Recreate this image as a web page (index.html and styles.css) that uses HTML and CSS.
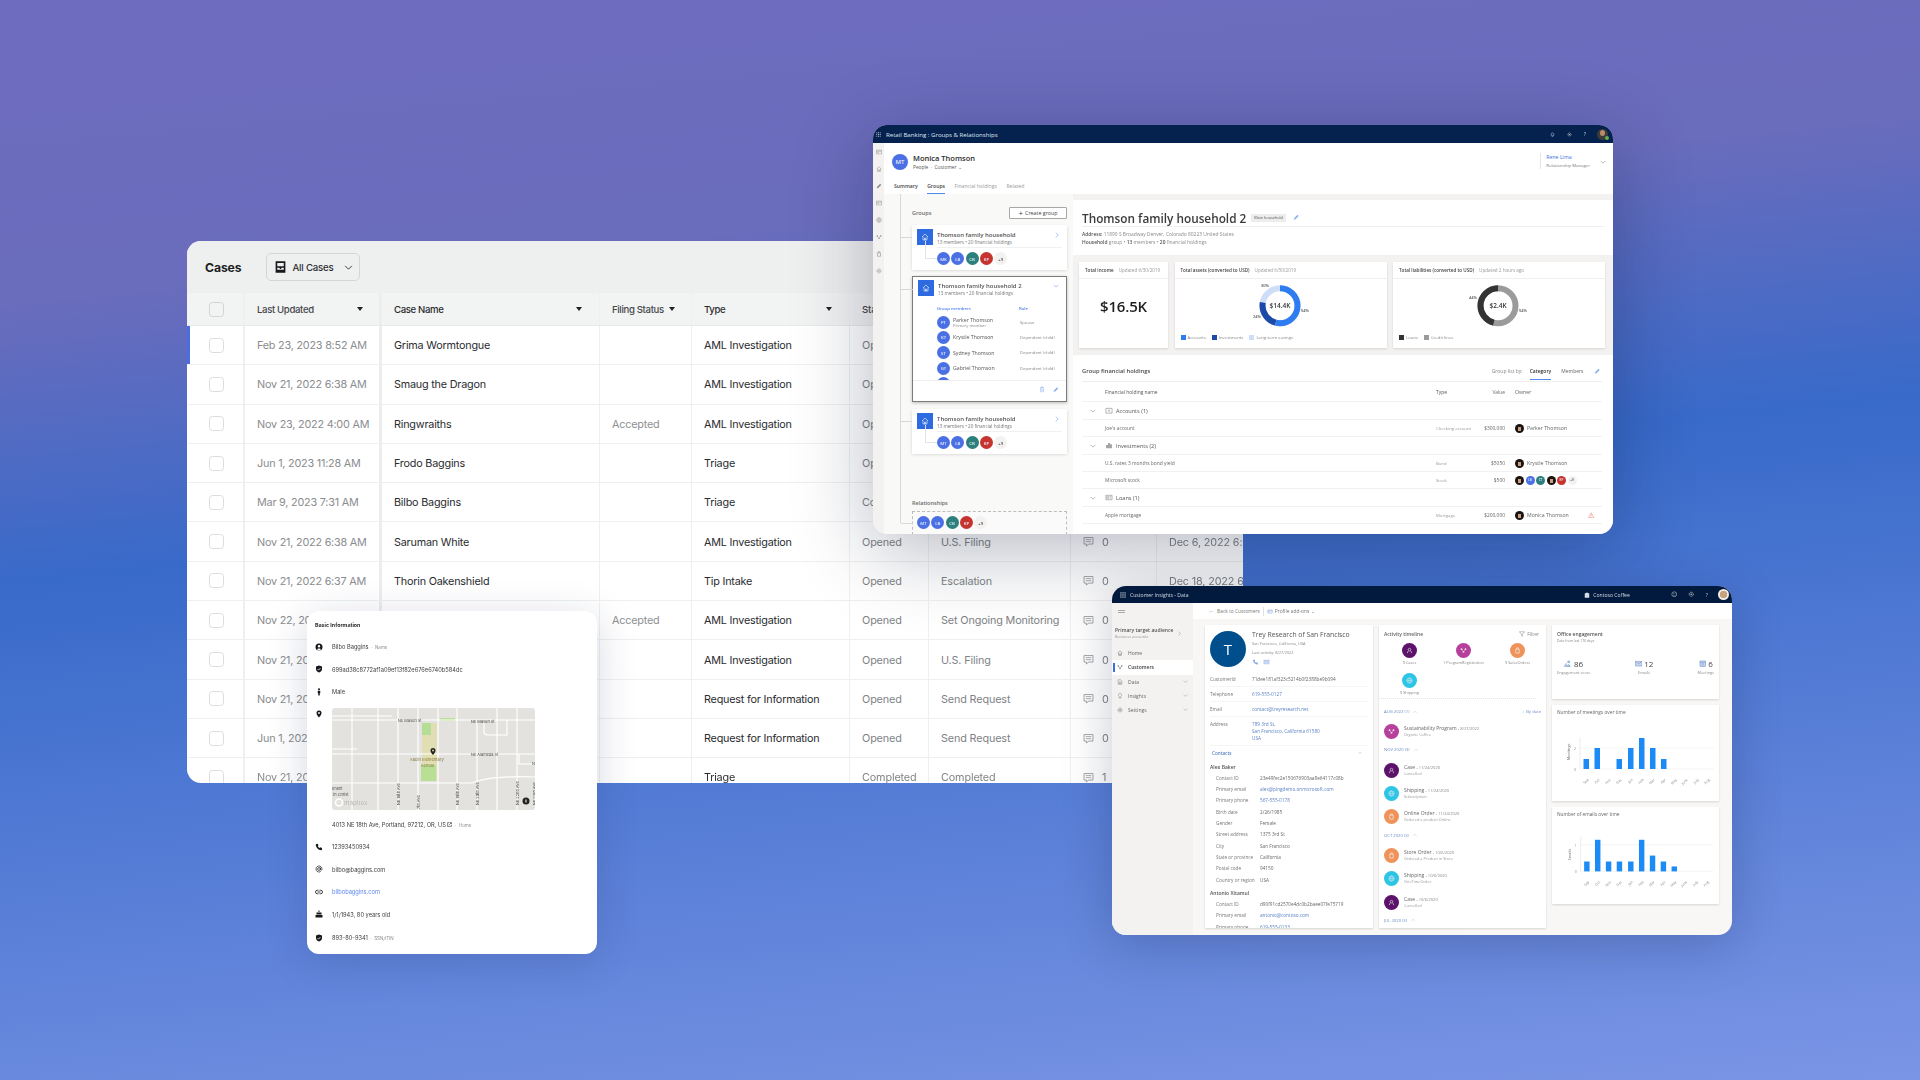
FILE: index.html
```html
<!DOCTYPE html>
<html lang="en">
<head>
<meta charset="utf-8">
<title>Product screens</title>
<link rel="stylesheet" href="styles.css">
</head>
<body>
<svg class="sprite" aria-hidden="true">
  <symbol id="i-home" viewBox="0 0 16 16"><path d="M2 8l6-6 6 6M4 7v7h8V7M7 14v-4h2v4" fill="none" stroke="currentColor" stroke-width="1.3"/></symbol>
  <symbol id="i-right" viewBox="0 0 16 16"><path d="M5 2l6 6-6 6" fill="none" stroke="currentColor" stroke-width="1.5"/></symbol>
  <symbol id="i-down" viewBox="0 0 16 16"><path d="M2 5l6 6 6-6" fill="none" stroke="currentColor" stroke-width="1.5"/></symbol>
  <symbol id="i-up" viewBox="0 0 16 16"><path d="M2 11l6-6 6 6" fill="none" stroke="currentColor" stroke-width="1.5"/></symbol>
  <symbol id="i-pencil" viewBox="0 0 16 16"><path d="M2 14l1-4 8-8 3 3-8 8z" fill="currentColor"/></symbol>
  <symbol id="i-trash" viewBox="0 0 16 16"><path d="M4 3h8v11H4zM6 1h4v2H6z" fill="none" stroke="currentColor" stroke-width="1.4"/><path d="M7 6v6M9 6v6" stroke="currentColor"/></symbol>
  <symbol id="i-bell" viewBox="0 0 16 16"><path d="M4 12V7a4 4 0 018 0v5zM6 14h4" fill="none" stroke="currentColor" stroke-width="1.6"/></symbol>
  <symbol id="i-gear" viewBox="0 0 16 16"><circle cx="8" cy="8" r="5" fill="none" stroke="currentColor" stroke-width="2.4" stroke-dasharray="2 1"/><circle cx="8" cy="8" r="2" fill="currentColor"/></symbol>
  <symbol id="i-smile" viewBox="0 0 16 16"><circle cx="8" cy="8" r="6" fill="none" stroke="currentColor" stroke-width="1.5"/><path d="M5 10q3 2 6 0" fill="none" stroke="currentColor"/><circle cx="6" cy="6.5" r="1" fill="currentColor"/><circle cx="10" cy="6.5" r="1" fill="currentColor"/></symbol>
  <symbol id="i-waffle" viewBox="0 0 16 16"><g fill="currentColor"><rect x="1" y="1" width="3" height="3"/><rect x="6.5" y="1" width="3" height="3"/><rect x="12" y="1" width="3" height="3"/><rect x="1" y="6.5" width="3" height="3"/><rect x="6.5" y="6.5" width="3" height="3"/><rect x="12" y="6.5" width="3" height="3"/><rect x="1" y="12" width="3" height="3"/><rect x="6.5" y="12" width="3" height="3"/><rect x="12" y="12" width="3" height="3"/></g></symbol>
  <symbol id="i-comment" viewBox="0 0 16 16"><path d="M1.5 1.5h13v9.5H8l-3 3v-3H1.5z" fill="none" stroke="currentColor" stroke-width="1.1"/><path d="M4 4.5h8M4 7.5h8" stroke="currentColor" stroke-width="1"/></symbol>
  <symbol id="i-inbox" viewBox="0 0 16 16"><path d="M2 1h12v14H2z" fill="currentColor"/><path d="M4 3h8v4H4zM4 9h2.500l1 1.500h1L9.500 9H12v2.500H4z" fill="#eeefef"/></symbol>
  <symbol id="i-user" viewBox="0 0 16 16"><path fill-rule="evenodd" d="M8 1a7 7 0 110 14A7 7 0 018 1zm0 3a2.500 2.500 0 100 5 2.500 2.500 0 000-5zM4 12.500c1-2 7-2 8 0A6 6 0 0 1 4 12.500z" fill="currentColor"/></symbol>
  <symbol id="i-shield" viewBox="0 0 16 16"><path d="M8 1l6 2v5c0 4-3 6-6 7-3-1-6-3-6-7V3z" fill="currentColor"/><path d="M5 8l2.200 2.200L11 6" fill="none" stroke="#fff" stroke-width="1.4"/></symbol>
  <symbol id="i-male" viewBox="0 0 16 16"><circle cx="8" cy="2.500" r="2" fill="currentColor"/><path d="M5.500 5.500h5v5H9.500V15h-3v-4.500h-1z" fill="currentColor"/></symbol>
  <symbol id="i-pin" viewBox="0 0 16 16"><path fill-rule="evenodd" d="M8 1a5 5 0 015 5c0 3.500-5 9-5 9S3 9.500 3 6a5 5 0 015-5zm0 3.200a1.800 1.800 0 100 3.600 1.800 1.800 0 000-3.600z" fill="currentColor"/></symbol>
  <symbol id="i-phone" viewBox="0 0 16 16"><path d="M3 2l2.500-.5 1.500 3-1.500 1.500c.8 1.800 2.200 3.200 4 4l1.500-1.500 3 1.500L14 13c-.3 1-1 1.500-2 1.500C7 14 2 9 1.500 4c0-1 .7-1.700 1.500-2z" fill="currentColor"/></symbol>
  <symbol id="i-at" viewBox="0 0 16 16"><circle cx="8" cy="8" r="2.800" fill="none" stroke="currentColor" stroke-width="1.4"/><path d="M10.800 5v4c0 2 3.200 2 3.200-1a6 6 0 10-2.500 4.900" fill="none" stroke="currentColor" stroke-width="1.4"/></symbol>
  <symbol id="i-link" viewBox="0 0 16 16"><path d="M7 4.500H4.500a3.500 3.500 0 000 7H7M9 4.500h2.500a3.500 3.500 0 010 7H9M5 8h6" fill="none" stroke="currentColor" stroke-width="1.6"/></symbol>
  <symbol id="i-cake" viewBox="0 0 16 16"><path d="M7 1h2v3H7zM3 5h10v4H3zM1 10h14v5H1z" fill="currentColor"/></symbol>
  <symbol id="i-ext" viewBox="0 0 16 16"><path d="M7 2H2v12h12V9M9 2h5v5M14 2L7 9" fill="none" stroke="currentColor" stroke-width="2"/></symbol>
  <symbol id="i-case" viewBox="0 0 16 16"><circle cx="8" cy="6" r="3" fill="none" stroke="currentColor" stroke-width="1.400"/><path d="M3 14c0-2 1.500-4 2.500-5M13 14c0-2-1.500-4-2.500-5" fill="none" stroke="currentColor" stroke-width="1.400"/></symbol>
  <symbol id="i-prog" viewBox="0 0 16 16"><circle cx="3.500" cy="5" r="2" fill="currentColor"/><circle cx="12.500" cy="5" r="2" fill="currentColor"/><circle cx="8" cy="11" r="2" fill="currentColor"/><path d="M3.500 5L8 11l4.500-6" fill="none" stroke="currentColor"/></symbol>
  <symbol id="i-bag" viewBox="0 0 16 16"><path d="M4 5h8v9H4zM6 5V2h4v3" fill="none" stroke="currentColor" stroke-width="1.500"/></symbol>
  <symbol id="i-globe" viewBox="0 0 16 16"><circle cx="8" cy="8" r="6" fill="none" stroke="currentColor" stroke-width="1.300"/><path d="M2 8h12M8 2c-3 3-3 9 0 12M8 2c3 3 3 9 0 12" fill="none" stroke="currentColor"/></symbol>
  <symbol id="i-filter" viewBox="0 0 16 16"><path d="M1 2h14L9.500 8.500V14l-3-1.500v-4z" fill="none" stroke="currentColor" stroke-width="1.200"/></symbol>
  <symbol id="i-mail" viewBox="0 0 16 16"><path d="M1 3h14v10H1z" fill="currentColor" opacity=".35"/><path d="M1 3h14v10H1zM1 3l7 5 7-5" fill="none" stroke="currentColor"/></symbol>
  <symbol id="i-cal" viewBox="0 0 16 16"><path d="M2 2h12v12H2z" fill="currentColor" opacity=".35"/><path d="M2 2h12v12H2zM2 5h12M6 8h4M6 11h4" fill="none" stroke="currentColor"/></symbol>
  <symbol id="i-people" viewBox="0 0 16 16"><circle cx="10" cy="4" r="3" fill="currentColor" opacity=".6"/><path d="M6 15c0-4 2-6 4-6s4 2 4 6z" fill="currentColor" opacity=".6"/><path d="M2 15V10M4.500 15V7" stroke="currentColor" stroke-width="1.600"/></symbol>
  <symbol id="i-list" viewBox="0 0 16 16"><path d="M1 3h14v10H1zM1 6h14M3 9h5" fill="none" stroke="currentColor" stroke-width="1.300"/></symbol>
  <symbol id="i-barsq" viewBox="0 0 16 16"><path d="M2 14V7h3v7zM6.500 14V2h3v12zM11 14V5h3v9z" fill="currentColor"/></symbol>
  <symbol id="i-acct" viewBox="0 0 16 16"><path d="M1 3h14v11H1z" fill="none" stroke="currentColor" stroke-width="1.200"/><path d="M6 11l2-5 2 5" fill="none" stroke="currentColor"/></symbol>
  <symbol id="i-loan" viewBox="0 0 16 16"><path d="M1 3h14v10H1z" fill="none" stroke="currentColor" stroke-width="1.200"/><path d="M3 6h4v4H3zM9 6h4M9 9h4" fill="none" stroke="currentColor"/></symbol>
  <symbol id="i-building" viewBox="0 0 16 16"><path d="M2 15V4l6-3 6 3v11zM5 7h2M9 7h2M5 10h2M9 10h2" fill="currentColor"/></symbol>
  <symbol id="i-warn" viewBox="0 0 16 16"><path d="M8 2l7 12H1z" fill="none" stroke="currentColor" stroke-width="1.500"/><path d="M8 6v4M8 11v1.500" stroke="currentColor" stroke-width="1.300"/></symbol>
  <symbol id="i-data" viewBox="0 0 16 16"><path d="M3 2h7l3 3v9H3zM6 8h4v4H6z" fill="none" stroke="currentColor" stroke-width="1.200"/></symbol>
  <symbol id="i-bulb" viewBox="0 0 16 16"><path d="M8 1a4.500 4.500 0 00-2.500 8.200V12h5V9.200A4.500 4.500 0 008 1zM6 14h4" fill="none" stroke="currentColor" stroke-width="1.200"/></symbol>
</svg>

<!-- Cases table -->
<section class="win win-cases">
  <header class="cases-head">
    <h1 class="cases-title">Cases</h1>
    <button class="view-btn"><svg class="ic-inbox"><use href="#i-inbox"/></svg><span>All Cases</span><svg class="ic-viewdown"><use href="#i-down"/></svg></button>
  </header>
  <div class="tbl">
    <div class="row row-head">
      <div class="cell c-check"><span class="box"></span></div>
      <div class="cell c-date">Last Updated<i class="sort"></i></div>
      <div class="cell c-name">Case Name<i class="sort"></i></div>
      <div class="cell c-filing">Filing Status<i class="sort"></i></div>
      <div class="cell c-type">Type<i class="sort"></i></div>
      <div class="cell c-status">Status</div>
      <div class="cell c-sub">Sub-status</div>
      <div class="cell c-com">Comments</div>
      <div class="cell c-due">Due Date</div>
    </div>
    <div class="row row-active">
      <div class="cell c-check"><span class="box"></span></div><div class="cell c-date">Feb 23, 2023 8:52 AM</div><div class="cell c-name">Grima Wormtongue</div><div class="cell c-filing"></div><div class="cell c-type">AML Investigation</div><div class="cell c-status">Opened</div><div class="cell c-sub">U.S. Filing</div><div class="cell c-com"><svg class="ic-com"><use href="#i-comment"/></svg>0</div><div class="cell c-due">Dec 6, 2022 6:38 AM</div>
    </div>
    <div class="row">
      <div class="cell c-check"><span class="box"></span></div><div class="cell c-date">Nov 21, 2022 6:38 AM</div><div class="cell c-name">Smaug the Dragon</div><div class="cell c-filing"></div><div class="cell c-type">AML Investigation</div><div class="cell c-status">Opened</div><div class="cell c-sub">U.S. Filing</div><div class="cell c-com"><svg class="ic-com"><use href="#i-comment"/></svg>0</div><div class="cell c-due">Dec 6, 2022 6:38 AM</div>
    </div>
    <div class="row">
      <div class="cell c-check"><span class="box"></span></div><div class="cell c-date">Nov 23, 2022 4:00 AM</div><div class="cell c-name">Ringwraiths</div><div class="cell c-filing">Accepted</div><div class="cell c-type">AML Investigation</div><div class="cell c-status">Opened</div><div class="cell c-sub">U.S. Filing</div><div class="cell c-com"><svg class="ic-com"><use href="#i-comment"/></svg>0</div><div class="cell c-due">Dec 6, 2022 6:38 AM</div>
    </div>
    <div class="row">
      <div class="cell c-check"><span class="box"></span></div><div class="cell c-date">Jun 1, 2023 11:28 AM</div><div class="cell c-name">Frodo Baggins</div><div class="cell c-filing"></div><div class="cell c-type">Triage</div><div class="cell c-status">Opened</div><div class="cell c-sub">Escalation</div><div class="cell c-com"><svg class="ic-com"><use href="#i-comment"/></svg>0</div><div class="cell c-due">Dec 6, 2022 6:38 AM</div>
    </div>
    <div class="row">
      <div class="cell c-check"><span class="box"></span></div><div class="cell c-date">Mar 9, 2023 7:31 AM</div><div class="cell c-name">Bilbo Baggins</div><div class="cell c-filing"></div><div class="cell c-type">Triage</div><div class="cell c-status">Completed</div><div class="cell c-sub">Completed</div><div class="cell c-com"><svg class="ic-com"><use href="#i-comment"/></svg>0</div><div class="cell c-due">Dec 6, 2022 6:38 AM</div>
    </div>
    <div class="row">
      <div class="cell c-check"><span class="box"></span></div><div class="cell c-date">Nov 21, 2022 6:38 AM</div><div class="cell c-name">Saruman White</div><div class="cell c-filing"></div><div class="cell c-type">AML Investigation</div><div class="cell c-status">Opened</div><div class="cell c-sub">U.S. Filing</div><div class="cell c-com"><svg class="ic-com"><use href="#i-comment"/></svg>0</div><div class="cell c-due">Dec 6, 2022 6:38 AM</div>
    </div>
    <div class="row">
      <div class="cell c-check"><span class="box"></span></div><div class="cell c-date">Nov 21, 2022 6:37 AM</div><div class="cell c-name">Thorin Oakenshield</div><div class="cell c-filing"></div><div class="cell c-type">Tip Intake</div><div class="cell c-status">Opened</div><div class="cell c-sub">Escalation</div><div class="cell c-com"><svg class="ic-com"><use href="#i-comment"/></svg>0</div><div class="cell c-due">Dec 18, 2022 6:37 AM</div>
    </div>
    <div class="row">
      <div class="cell c-check"><span class="box"></span></div><div class="cell c-date">Nov 22, 2022 4:00 AM</div><div class="cell c-name">Gollum</div><div class="cell c-filing">Accepted</div><div class="cell c-type">AML Investigation</div><div class="cell c-status">Opened</div><div class="cell c-sub">Set Ongoing Monitoring</div><div class="cell c-com"><svg class="ic-com"><use href="#i-comment"/></svg>0</div><div class="cell c-due">Dec 18, 2022 6:37 AM</div>
    </div>
    <div class="row">
      <div class="cell c-check"><span class="box"></span></div><div class="cell c-date">Nov 21, 2022 6:38 AM</div><div class="cell c-name">Sauron</div><div class="cell c-filing"></div><div class="cell c-type">AML Investigation</div><div class="cell c-status">Opened</div><div class="cell c-sub">U.S. Filing</div><div class="cell c-com"><svg class="ic-com"><use href="#i-comment"/></svg>0</div><div class="cell c-due">Dec 6, 2022 6:38 AM</div>
    </div>
    <div class="row">
      <div class="cell c-check"><span class="box"></span></div><div class="cell c-date">Nov 21, 2022 6:38 AM</div><div class="cell c-name">Samwise Gamgee</div><div class="cell c-filing"></div><div class="cell c-type">Request for Information</div><div class="cell c-status">Opened</div><div class="cell c-sub">Send Request</div><div class="cell c-com"><svg class="ic-com"><use href="#i-comment"/></svg>0</div><div class="cell c-due">Dec 6, 2022 6:38 AM</div>
    </div>
    <div class="row">
      <div class="cell c-check"><span class="box"></span></div><div class="cell c-date">Jun 1, 2023 11:28 AM</div><div class="cell c-name">Peregrin Took</div><div class="cell c-filing"></div><div class="cell c-type">Request for Information</div><div class="cell c-status">Opened</div><div class="cell c-sub">Send Request</div><div class="cell c-com"><svg class="ic-com"><use href="#i-comment"/></svg>0</div><div class="cell c-due">Dec 6, 2022 6:38 AM</div>
    </div>
    <div class="row">
      <div class="cell c-check"><span class="box"></span></div><div class="cell c-date">Nov 21, 2022 6:38 AM</div><div class="cell c-name">Meriadoc Brandybuck</div><div class="cell c-filing"></div><div class="cell c-type">Triage</div><div class="cell c-status">Completed</div><div class="cell c-sub">Completed</div><div class="cell c-com"><svg class="ic-com"><use href="#i-comment"/></svg>1</div><div class="cell c-due">Dec 6, 2022 6:38 AM</div>
    </div>
  </div>
</section>

<!-- Basic information card -->
<section class="win win-info">
  <h2 class="info-title">Basic Information</h2>
  <div class="info-row"><svg class="ic-info"><use href="#i-user"/></svg><div>Bilbo Baggins<span class="info-tag"> &nbsp;· &nbsp;Name</span></div></div>
  <div class="info-row"><svg class="ic-info"><use href="#i-shield"/></svg><div>699ad38c8772af1a09ef13f82e676e6740b584dc</div></div>
  <div class="info-row"><svg class="ic-info"><use href="#i-male"/></svg><div>Male</div></div>
  <div class="info-map-row">
    <svg class="ic-info"><use href="#i-pin"/></svg>
    <svg class="map" viewBox="0 0 203 102">
      <rect width="203" height="102" fill="#e3e2df"/>
      <rect x="90" y="15" width="15" height="58" fill="#e2deb3"/>
      <rect x="90" y="15" width="9" height="12" fill="#b6dd96"/>
      <rect x="89" y="57" width="15" height="16" fill="#b8df94"/>
      <rect x="108" y="10" width="15" height="3" fill="#b8df94"/>
      <g stroke="#fff" stroke-width="1.200" fill="none">
        <path d="M0 8H60M0 12H203M0 46H203M0 75H140q20-8 63-6M0 41H25"/>
        <path d="M20 0V102M46 0V102M66 0V102M86 0V102M106 0V102M125 0V102M145 12V102M165 0V102M185 0V102M152 12V24q0 3 3 3H175V12M187 46V56H203"/>
      </g>
      <g class="map-label">
        <text x="66" y="13.500">NE Mason St</text>
        <text x="139" y="14.500">NE Mason St</text>
        <text x="139" y="47.500">NE Alameda St</text>
        <text x="-1" y="82">ument</text>
        <text x="-1" y="88">t in Christ</text>
        <text x="200" y="57">N</text>
      </g>
      <g class="map-label map-school">
        <text x="78" y="53">Sabin Elementary</text>
        <text x="89" y="58.500">School</text>
      </g>
      <g class="map-label">
        <text transform="translate(68 97) rotate(-90)">NE 16th Ave</text>
        <text transform="translate(88 101) rotate(-90)">7th Ave</text>
        <text transform="translate(127 97) rotate(-90)">NE 19th Ave</text>
        <text transform="translate(147 97) rotate(-90)">NE 20th Ave</text>
        <text transform="translate(187 97) rotate(-90)">NE 22nd Ave</text>
        <text transform="translate(204 97) rotate(-90)">NE 23rd Ave</text>
      </g>
      <use href="#i-pin" x="97" y="39" width="8" height="9" color="#222"/>
      <circle cx="7" cy="94.500" r="3.500" fill="none" stroke="#fff" stroke-width="1.500"/>
      <text class="map-logo" x="12" y="97">mapbox</text>
      <circle cx="194" cy="93" r="3.500" fill="#222"/>
      <rect x="193.500" y="91.500" width="1" height="3" fill="#fff"/>
    </svg>
  </div>
  <div class="info-row"><span></span><div>4013 NE 18th Ave, Portland, 97212, OR, US <svg class="ic-ext"><use href="#i-ext"/></svg><span class="info-tag"> &nbsp;· &nbsp;Home</span></div></div>
  <div class="info-row"><svg class="ic-info"><use href="#i-phone"/></svg><div>12393450934</div></div>
  <div class="info-row"><svg class="ic-info"><use href="#i-at"/></svg><div>bilbo@baggins.com</div></div>
  <div class="info-row"><svg class="ic-info"><use href="#i-link"/></svg><div class="info-link">bilbobaggins.com</div></div>
  <div class="info-row"><svg class="ic-info"><use href="#i-cake"/></svg><div>1/1/1943, 80 years old</div></div>
  <div class="info-row info-last"><svg class="ic-info"><use href="#i-shield"/></svg><div>893-80-9341<span class="info-tag"> &nbsp;· &nbsp;SSN/ITIN</span></div></div>
</section>

<!-- Retail banking window -->
<section class="win win-retail">
  <header class="rb-top">
    <svg class="rb-waffle"><use href="#i-waffle"/></svg>
    <span class="rb-app">Retail Banking : Groups &amp; Relationships</span>
    <span class="grow"></span>
    <svg class="rb-topic"><use href="#i-bell"/></svg>
    <svg class="rb-topic"><use href="#i-gear"/></svg>
    <span class="rb-q">?</span>
    <span class="rb-me"><i class="me-head"></i><i class="me-dot"></i></span>
  </header>
  <div class="rb-body">
    <nav class="rb-rail">
      <svg><use href="#i-list"/></svg><svg><use href="#i-home"/></svg><svg><use href="#i-pencil"/></svg><svg><use href="#i-list"/></svg><svg><use href="#i-globe"/></svg><svg><use href="#i-prog"/></svg><svg><use href="#i-bag"/></svg><svg><use href="#i-gear"/></svg>
    </nav>
    <div class="rb-main">
      <div class="rb-head">
        <div class="rb-person">
          <span class="av av-lg av-b">MT</span>
          <div class="rb-who">
            <div class="rb-name">Monica Thomson</div>
            <div class="rb-kind">People &nbsp;·&nbsp; Customer ⌄</div>
          </div>
          <span class="grow"></span>
          <div class="rb-mgr">
            <div class="rb-mgr-name">Rene Lima</div>
            <div class="rb-mgr-role">Relationship Manager</div>
          </div>
          <svg class="rb-mgr-chev"><use href="#i-down"/></svg>
        </div>
        <div class="rb-tabs">
          <span>Summary</span><span class="tab-on">Groups</span><span class="tab-soft">Financial holdings</span><span class="tab-soft">Related</span>
        </div>
      </div>
      <div class="rb-content">
        <div class="rb-left">
          <div class="tree">
            <div class="gr-head"><span class="gr-label">Groups</span><button class="gr-btn"><b>+</b> Create group</button></div>
            <article class="gcard">
              <div class="gc-top">
                <span class="gc-house"><svg><use href="#i-home"/></svg></span>
                <div class="gc-txt"><div class="gc-name">Thomson family household</div><div class="gc-sub">13 members • 20 financial holdings</div></div>
                <svg class="gc-chev"><use href="#i-right"/></svg>
              </div>
              <div class="gc-foot">
                <span class="av av-b">MK</span><span class="av av-b">LB</span><span class="av av-t">CB</span><span class="av av-r">KP</span><span class="av av-g">+9</span>
              </div>
            </article>
            <article class="gcard gcard-open">
              <div class="gc-top">
                <span class="gc-house"><svg><use href="#i-home"/></svg></span>
                <div class="gc-txt"><div class="gc-name">Thomson family household 2</div><div class="gc-sub">13 members • 20 financial holdings</div></div>
                <svg class="gc-chev"><use href="#i-down"/></svg>
              </div>
              <div class="gm-head"><span>Group members</span><span>Role</span></div>
              <div class="gm-list">
                <div class="gm"><span class="av av-b">PT</span><div class="gm-who"><div class="gm-name">Parker Thomson</div><div class="gm-sub">Primary member</div></div><span class="gm-role">Spouse</span></div>
                <div class="gm"><span class="av av-b">KT</span><div class="gm-who"><div class="gm-name">Krystle Thomson</div></div><span class="gm-role">Dependent (child)</span></div>
                <div class="gm"><span class="av av-b">ST</span><div class="gm-who"><div class="gm-name">Sydney Thomson</div></div><span class="gm-role">Dependent (child)</span></div>
                <div class="gm"><span class="av av-b">GT</span><div class="gm-who"><div class="gm-name">Gabriel Thomson</div></div><span class="gm-role">Dependent (child)</span></div>
                <div class="gm"><span class="av av-b">JT</span><div class="gm-who"></div></div>
              </div>
              <div class="gm-actions"><svg><use href="#i-trash"/></svg><svg><use href="#i-pencil"/></svg></div>
            </article>
            <article class="gcard">
              <div class="gc-top">
                <span class="gc-house"><svg><use href="#i-home"/></svg></span>
                <div class="gc-txt"><div class="gc-name">Thomson family household</div><div class="gc-sub">13 members • 20 financial holdings</div></div>
                <svg class="gc-chev"><use href="#i-right"/></svg>
              </div>
              <div class="gc-foot">
                <span class="av av-b">MT</span><span class="av av-b">LB</span><span class="av av-t">CB</span><span class="av av-r">KP</span><span class="av av-g">+9</span>
              </div>
            </article>
            <div class="rel-label">Relationships</div>
            <div class="rel-box">
              <span class="av av-b">MT</span><span class="av av-b">LB</span><span class="av av-t">CB</span><span class="av av-r">KP</span><span class="av av-g">+9</span>
            </div>
          </div>
        </div>
        <div class="rb-right">
          <div class="hh">
            <div class="hh-title"><h2>Thomson family household 2</h2><span class="hh-tag">Main household</span><svg class="hh-pen"><use href="#i-pencil"/></svg></div>
            <div class="hh-line"><b>Address:</b> 11890 S Broadway Denver, Colorado 80223 United States</div>
            <div class="hh-line"><b>Household</b> group • <b>13</b> members • <b>20</b> financial holdings</div>
          </div>
          <div class="kpis">
            <div class="kpi">
              <div class="kpi-head"><b>Total income</b><span>Updated 6/30/2019</span></div>
              <div class="kpi-big">$16.5K</div>
            </div>
            <div class="kpi">
              <div class="kpi-head"><b>Total assets (converted to USD)</b><span>Updated 6/30/2019</span></div>
              <svg class="donut" viewBox="0 0 212 54">
                <g transform="translate(105 26.700)">
                  <circle r="17.500" class="ring" stroke="#cfdef8" pathLength="100"/>
                  <circle r="17.500" class="ring" stroke="#1b4aa8" pathLength="100" stroke-dasharray="24 76" stroke-dashoffset="-54" transform="rotate(-90)"/>
                  <circle r="17.500" class="ring" stroke="#2f7cf0" pathLength="100" stroke-dasharray="54 46" transform="rotate(-90)"/>
                  <text class="donut-val" text-anchor="middle" y="2.500">$14.4K</text>
                </g>
                <text class="donut-pct" x="86" y="7.500">30%</text>
                <text class="donut-pct" x="126" y="32.500">54%</text>
                <text class="donut-pct" x="78" y="39">24%</text>
              </svg>
              <div class="legend"><span><i class="sw sw-a"></i>Accounts</span><span><i class="sw sw-b"></i>Investments</span><span><i class="sw sw-c"></i>Long-term savings</span></div>
            </div>
            <div class="kpi">
              <div class="kpi-head"><b>Total liabilities (converted to USD)</b><span>Updated 2 hours ago</span></div>
              <svg class="donut" viewBox="0 0 212 54">
                <g transform="translate(105 26.700)">
                  <circle r="17.500" class="ring" stroke="#9b9b9b" pathLength="100"/>
                  <circle r="17.500" class="ring" stroke="#333" pathLength="100" stroke-dasharray="46 54" stroke-dashoffset="-54" transform="rotate(-90)"/>
                  <text class="donut-val" text-anchor="middle" y="2.500">$2.4K</text>
                </g>
                <text class="donut-pct" x="76" y="20">44%</text>
                <text class="donut-pct" x="126" y="32.500">54%</text>
              </svg>
              <div class="legend"><span><i class="sw sw-d"></i>Loans</span><span><i class="sw sw-e"></i>Credit lines</span></div>
            </div>
          </div>
          <div class="hold">
            <div class="hold-top">
              <b class="hold-title">Group financial holdings</b>
              <span class="grow"></span>
              <span class="hold-by">Group list by:</span>
              <span class="hold-tab hold-on">Category</span>
              <span class="hold-tab">Members</span>
              <svg class="hold-pen"><use href="#i-pencil"/></svg>
            </div>
            <div class="hr hr-head"><span></span><span>Financial holding name</span><span>Type</span><span class="val">Value</span><span class="own">Owner</span></div>
            <div class="hr hr-group"><svg class="hg-chev"><use href="#i-down"/></svg><span class="hg"><svg><use href="#i-acct"/></svg>Accounts (1)</span></div>
            <div class="hr hr-item"><span></span><span>Joe's account</span><span class="ty">Checking account</span><span class="val">$300,000</span><span class="own"><i class="face"></i>Parker Thomson</span></div>
            <div class="hr hr-group"><svg class="hg-chev"><use href="#i-down"/></svg><span class="hg"><svg><use href="#i-barsq"/></svg>Investments (2)</span></div>
            <div class="hr hr-item"><span></span><span>U.S. rates 3 months bond yield</span><span class="ty">Bond</span><span class="val">$5050</span><span class="own"><i class="face"></i>Krystle Thomson</span></div>
            <div class="hr hr-item"><span></span><span>Microsoft stock</span><span class="ty">Stock</span><span class="val">$500</span><span class="own own-multi"><i class="face"></i><span class="av av-s av-b">LB</span><span class="av av-s av-t">CT</span><i class="face"></i><span class="av av-s av-r">KP</span><span class="av av-s av-g">+9</span></span></div>
            <div class="hr hr-group"><svg class="hg-chev"><use href="#i-down"/></svg><span class="hg"><svg><use href="#i-loan"/></svg>Loans (1)</span></div>
            <div class="hr hr-item"><span></span><span>Apple mortgage</span><span class="ty">Mortgage</span><span class="val">$200,000</span><span class="own"><i class="face"></i>Monica Thomson<svg class="warn"><use href="#i-warn"/></svg></span></div>
          </div>
        </div>
      </div>
    </div>
  </div>
</section>

<!-- Customer insights window -->
<section class="win win-ci">
  <header class="ci-top">
    <svg class="ci-waffle"><use href="#i-waffle"/></svg>
    <span class="ci-app">Customer Insights - Data</span>
    <span class="grow"></span>
    <svg class="ci-bld"><use href="#i-building"/></svg><span class="ci-org">Contoso Coffee</span>
    <svg class="ci-topic"><use href="#i-smile"/></svg><svg class="ci-topic"><use href="#i-gear"/></svg><span class="ci-q">?</span><i class="ci-me"></i>
  </header>
  <div class="ci-body">
    <nav class="ci-nav">
      <div class="ci-burger"></div>
      <div class="ci-aud"><div><div class="ci-aud-t">Primary target audience</div><div class="ci-aud-s">Business accounts</div></div><svg><use href="#i-right"/></svg></div>
      <div class="ci-item"><svg><use href="#i-home"/></svg>Home</div>
      <div class="ci-item ci-on"><svg><use href="#i-prog"/></svg>Customers</div>
      <div class="ci-item"><svg><use href="#i-data"/></svg>Data<svg class="ci-chev"><use href="#i-down"/></svg></div>
      <div class="ci-item"><svg><use href="#i-bulb"/></svg>Insights<svg class="ci-chev"><use href="#i-down"/></svg></div>
      <div class="ci-item"><svg><use href="#i-gear"/></svg>Settings<svg class="ci-chev"><use href="#i-down"/></svg></div>
    </nav>
    <div class="ci-main">
      <div class="ci-sub"><span class="ci-back">←</span>Back to Customers<i class="ci-sep"></i><svg><use href="#i-list"/></svg>Profile add-ons ⌄</div>
      <div class="ci-panels">
        <div class="panel p-profile">
          <div class="pf-top">
            <span class="pf-av">T</span>
            <div>
              <div class="pf-name">Trey Research of San Francisco</div>
              <div class="pf-meta">San Francisco, California, USA</div>
              <div class="pf-meta">Last activity: 8/27/2022</div>
              <div class="pf-acts"><svg><use href="#i-phone"/></svg><svg><use href="#i-mail"/></svg></div>
            </div>
          </div>
          <div class="kv kv-dark"><span>CustomerId</span><span>71dee181af323c5214b0f2388be9b094</span></div>
          <div class="kv"><span>Telephone</span><a>619-555-0127</a></div>
          <div class="kv"><span>Email</span><a>contact@treyresearch.net</a></div>
          <div class="kv kv-addr"><span>Address</span><a>789 3rd St,<br>San Francisco, California 61580<br>USA</a></div>
          <div class="pf-contacts"><span>Contacts</span><svg><use href="#i-up"/></svg></div>
          <div class="ct-name">Alex Baker</div>
          <div class="ct"><span>Contact ID</span><span>23e49fec2e150676903aa8e64117c08b</span></div>
          <div class="ct"><span>Primary email</span><a>alex@pingdemo.onmicrosoft.com</a></div>
          <div class="ct"><span>Primary phone</span><a>567-555-0178</a></div>
          <div class="ct"><span>Birth date</span><span>2/26/1985</span></div>
          <div class="ct"><span>Gender</span><span>Female</span></div>
          <div class="ct"><span>Street address</span><span>1375 3rd St</span></div>
          <div class="ct"><span>City</span><span>San Francisco</span></div>
          <div class="ct"><span>State or province</span><span>California</span></div>
          <div class="ct"><span>Postal code</span><span>94150</span></div>
          <div class="ct"><span>Country or region</span><span>USA</span></div>
          <div class="ct-name ct-name2">Antonio Xitamul</div>
          <div class="ct"><span>Contact ID</span><span>d90f91cd2570e4dc0b2baee07fe75719</span></div>
          <div class="ct"><span>Primary email</span><a>antonio@contoso.com</a></div>
          <div class="ct"><span>Primary phone</span><a>619-555-0133</a></div>
        </div>
        <div class="panel p-activity">
          <div class="at-head"><b>Activity timeline</b><span class="at-filter"><svg><use href="#i-filter"/></svg>Filter</span></div>
          <div class="at-sum">
            <div class="at-cell"><span class="dot dot-lg d-case"><svg><use href="#i-case"/></svg></span><span>9 Cases</span></div>
            <div class="at-cell"><span class="dot dot-lg d-prog"><svg><use href="#i-prog"/></svg></span><span>1 ProgramRegistration</span></div>
            <div class="at-cell"><span class="dot dot-lg d-order"><svg><use href="#i-bag"/></svg></span><span>9 SalesOrders</span></div>
            <div class="at-cell"><span class="dot dot-lg d-ship"><svg><use href="#i-globe"/></svg></span><span>9 Shipping</span></div>
          </div>
          <div class="at-month at-month1"><span>AUG 2022 (1)</span><svg><use href="#i-up"/></svg><span class="grow"></span><span class="at-by">↓ &nbsp;By date</span></div>
          <div class="at-item"><span class="dot d-prog"><svg><use href="#i-prog"/></svg></span><div><div class="at-t">Sustainability Program <small>- 8/27/2022</small></div><div class="at-s">Organic Coffee</div></div></div>
          <div class="at-month"><span>NOV 2020 (3)</span><svg><use href="#i-up"/></svg></div>
          <div class="at-item"><span class="dot d-case"><svg><use href="#i-case"/></svg></span><div><div class="at-t">Case <small>- 11/24/2020</small></div><div class="at-s">Cancelled</div></div></div>
          <div class="at-item"><span class="dot d-ship"><svg><use href="#i-globe"/></svg></span><div><div class="at-t">Shipping <small>- 11/24/2020</small></div><div class="at-s">Subscription</div></div></div>
          <div class="at-item"><span class="dot d-order"><svg><use href="#i-bag"/></svg></span><div><div class="at-t">Online Order <small>- 11/24/2020</small></div><div class="at-s">Ordered a product Online</div></div></div>
          <div class="at-month"><span>OCT 2020 (3)</span><svg><use href="#i-up"/></svg></div>
          <div class="at-item"><span class="dot d-order"><svg><use href="#i-bag"/></svg></span><div><div class="at-t">Store Order <small>- 10/6/2020</small></div><div class="at-s">Ordered a Product in Store</div></div></div>
          <div class="at-item"><span class="dot d-ship"><svg><use href="#i-globe"/></svg></span><div><div class="at-t">Shipping <small>- 10/6/2020</small></div><div class="at-s">OneTimeOrder</div></div></div>
          <div class="at-item"><span class="dot d-case"><svg><use href="#i-case"/></svg></span><div><div class="at-t">Case <small>- 10/6/2020</small></div><div class="at-s">Cancelled</div></div></div>
          <div class="at-month"><span>JUL 2020 (3)</span><svg><use href="#i-up"/></svg></div>
        </div>
        <div class="p-stack">
          <div class="panel p-office">
            <div class="off-t">Office engagement</div>
            <div class="off-s">Data from last 176 days</div>
            <div class="off-stats">
              <div class="off-stat off-left"><div class="off-num"><svg><use href="#i-people"/></svg>86</div><div class="off-lab">Engagement score</div></div>
              <div class="off-stat"><div class="off-num"><svg><use href="#i-mail"/></svg>12</div><div class="off-lab">Emails</div></div>
              <div class="off-stat off-right"><div class="off-num"><svg><use href="#i-cal"/></svg>6</div><div class="off-lab">Meetings</div></div>
            </div>
          </div>
          <div class="panel p-chart p-chart1">
            <div class="ch-t">Number of meetings over time</div>
            <svg class="chart" viewBox="0 0 167 81">
              <path class="grid" d="M28 28H162M28 49H162"/><path class="axis" d="M28 17V49"/>
              <text class="yl" x="24" y="30" text-anchor="end">2</text><text class="yl" x="24" y="51" text-anchor="end">0</text>
              <text class="yt" transform="translate(18 32) rotate(-90)" text-anchor="middle">Meetings</text>
              <g class="bars"><rect x="31.500" y="39" width="5.500" height="10"/><rect x="42.500" y="28" width="5.500" height="21"/><rect x="64.500" y="39" width="5.500" height="10"/><rect x="76" y="28" width="5.500" height="21"/><rect x="87" y="18" width="5.500" height="31"/><rect x="98" y="28" width="5.500" height="21"/><rect x="109" y="39" width="5.500" height="10"/></g>
              <g class="xl"><text transform="translate(37 60) rotate(-45)">Sep</text><text transform="translate(48 60) rotate(-45)">Oct</text><text transform="translate(59 60) rotate(-45)">Nov</text><text transform="translate(70 60) rotate(-45)">Dec</text><text transform="translate(81 60) rotate(-45)">Jan</text><text transform="translate(92 60) rotate(-45)">Feb</text><text transform="translate(103 60) rotate(-45)">Mar</text><text transform="translate(114 60) rotate(-45)">Apr</text><text transform="translate(125 60) rotate(-45)">May</text><text transform="translate(136 60) rotate(-45)">June</text><text transform="translate(147 60) rotate(-45)">July</text><text transform="translate(158 60) rotate(-45)">Aug</text></g>
            </svg>
          </div>
          <div class="panel p-chart">
            <div class="ch-t">Number of emails over time</div>
            <svg class="chart" viewBox="0 0 167 82">
              <path class="grid" d="M28 23H162M28 50H162"/><path class="axis" d="M28 15V50"/>
              <text class="yl" x="24" y="25" text-anchor="end">1</text><text class="yl" x="24" y="52" text-anchor="end">0</text>
              <text class="yt" transform="translate(18 33) rotate(-90)" text-anchor="middle">Emails</text>
              <g class="bars"><rect x="31.500" y="40" width="5.500" height="10"/><rect x="42.500" y="18" width="5.500" height="32"/><rect x="53.500" y="40" width="5.500" height="10"/><rect x="64.500" y="40" width="5.500" height="10"/><rect x="76" y="40" width="5.500" height="10"/><rect x="87" y="18" width="5.500" height="32"/><rect x="98" y="34" width="5.500" height="16"/><rect x="109" y="40" width="5.500" height="10"/><rect x="120" y="45" width="5.500" height="5"/></g>
              <g class="xl"><text transform="translate(37 61) rotate(-45)">Sep</text><text transform="translate(48 61) rotate(-45)">Oct</text><text transform="translate(59 61) rotate(-45)">Nov</text><text transform="translate(70 61) rotate(-45)">Dec</text><text transform="translate(81 61) rotate(-45)">Jan</text><text transform="translate(92 61) rotate(-45)">Feb</text><text transform="translate(103 61) rotate(-45)">Mar</text><text transform="translate(114 61) rotate(-45)">Apr</text><text transform="translate(125 61) rotate(-45)">May</text><text transform="translate(136 61) rotate(-45)">June</text><text transform="translate(147 61) rotate(-45)">July</text><text transform="translate(158 61) rotate(-45)">Aug</text></g>
            </svg>
          </div>
        </div>
      </div>
    </div>
  </div>
</section>
</body>
</html>
```
FILE: styles.css
```css
* { box-sizing: border-box; }
html, body { margin: 0; height: 100%; }
body {
  width: 1920px; height: 1080px; overflow: hidden; position: relative;
  background: linear-gradient(174.4deg, #6e6cbf 0%, #6a6cbc 24%, #386aca 46%, #7b95e5 100%);
  font-family: Inter, "Liberation Sans", sans-serif;
}
.sprite { display: none; }
.grow { flex: 1; }
h1, h2, p { margin: 0; }
button { font: inherit; padding: 0; }
svg { display: block; }
.win { position: absolute; overflow: hidden; }

/* ---------- Cases ---------- */
.win-cases {
  left: 187px; top: 241px; width: 1056px; height: 542px;
  border-radius: 14px; background: #fff; filter: blur(.3px);
}
.cases-head { height: 52px; background: #eeefef; display: flex; align-items: center; padding: 0 18px; gap: 24px; }
.cases-title { font-size: 12.200px; font-weight: 700; color: #1d1f22; letter-spacing: -.1px; }
.view-btn { width: 94px; height: 28px; border: 1px solid #d4d5d6; border-radius: 5px; background: transparent; display: flex; align-items: center; gap: 6px; padding: 0 0 0 7px; font-size: 9.600px; font-weight: 500; color: #2c2e31; letter-spacing: -.2px; }
.ic-inbox { width: 13px; height: 14px; color: #17191c; }
.ic-viewdown { width: 9px; height: 9px; margin-left: 5px; color: #222; }
.row { display: grid; grid-template-columns: 58px 137px 218px 92px 158px 79px 142px 86px 86px; height: 39.3px; border-bottom: 1px solid #eef0f0; font-size: 10.800px; letter-spacing: -.2px; color: #2a2c2f; position: relative; }
.row-head { height: 33px; background: #f2f3f3; color: #46484b; font-size: 9.600px; letter-spacing: -.35px; font-weight: 500; border-bottom-color: #e8eaea; }
.row-active::before { content: ""; position: absolute; left: 0; top: 0; bottom: 0; width: 3px; background: #4a6ee0; }
.cell { display: flex; align-items: center; padding-left: 12px; padding-top: 1px; white-space: nowrap; overflow: hidden; border-right: 1px solid #eef0f0; position: relative; }
.c-check { padding-left: 22px; padding-top: 0; border-right-width: 2px; }
.c-date { color: #8a8d90; padding-left: 12px; border-right: 3px solid #eceded; }
.row-head .c-date, .row-head .c-status, .row-head .c-sub, .row-head .c-com, .row-head .c-due, .row-head .c-filing { color: #46484b; }
.c-filing { color: #8d9093; }
.c-status, .c-sub, .c-com, .c-due { color: #808386; letter-spacing: -.13px; }
.c-name, .c-type { color: #2a2c2f; }
.c-due { border-right: 0; }
.box { width: 15px; height: 15px; border: 1px solid #dcdddd; border-radius: 3.500px; background: #fff; }
.row-head .box { background: transparent; border-color: #d2d3d4; }
.sort { position: absolute; right: 16px; top: 50%; margin-top: -2px; width: 0; height: 0; border: 3.200px solid transparent; border-top: 4px solid #222; border-bottom: 0; }
.c-name .sort { right: 17px; }
.c-filing .sort { right: 16px; }
.c-type .sort { right: 17px; }
.ic-com { width: 11px; height: 12px; margin-right: 8px; color: #8a8d90; }

/* ---------- Basic info ---------- */
.win-info {
  left: 307px; top: 611px; width: 290px; height: 343px;
  background: #fff; border-radius: 12px; padding: 9px 0 0 8px;
  font-size: 5.700px; color: #3b3d40; box-shadow: 0 8px 40px rgba(30,40,90,.18); filter: blur(.35px);
  overflow: visible;
}
.info-title { font-size: 5.300px; line-height: 10px; font-weight: 700; color: #2b2d30; margin-bottom: 5.500px; }
.info-row { display: grid; grid-template-columns: 17px 1fr; align-items: center; height: 22.500px; }
.info-last { margin-top: 1px; }
.ic-info { width: 8px; height: 8px; color: #16181b; }
.info-map-row { display: grid; grid-template-columns: 17px 203px; margin-top: 5px; }
.info-map-row .ic-info { margin-top: 2px; }
.map { width: 203px; height: 102px; border-radius: 3px; margin-bottom: 3px; }
.map-label text { font-size: 3.900px; fill: #4c4c4c; font-family: Inter, sans-serif; }
.map-school text { fill: #8a7a40; font-size: 4.100px; }
.map-logo { font-size: 6px; fill: #aaa; font-weight: 700; font-family: Inter, sans-serif; stroke: #fff; stroke-width: .2px; }
.info-tag { color: #8d8f92; font-size: 4.500px; }
.info-link { color: #5b86ea; }
.ic-ext { display: inline-block; width: 5px; height: 5px; vertical-align: -.5px; color: #333; }

/* ---------- Retail banking ---------- */
.win-retail {
  left: 873px; top: 125px; width: 740px; height: 409px;
  border-radius: 14px; background: #f3f2f1; color: #333;
  font-family: "Open Sans", "Liberation Sans", sans-serif;
  box-shadow: 0 16px 80px rgba(10,20,50,.3); filter: blur(.4px);
}
.rb-top { height: 18px; background: #05224f; color: #fff; display: flex; align-items: center; padding: 0 5px 0 3px; font-size: 6.100px; }
.rb-waffle { width: 5px; height: 5px; margin-right: 5px; opacity: .85; color: #dfe6f2; }
.rb-app { color: #dfe6f2; font-weight: 500; }
.rb-topic { width: 5px; height: 5px; color: #c8cfda; margin-right: 12px; }
.rb-q { color: #c8cfda; margin-right: 11px; font-size: 5.200px; }
.rb-me { width: 11px; height: 11px; border-radius: 50%; background: #3d3a3a; position: relative; display: block; }
.me-head { position: absolute; left: 3px; top: 1px; width: 5px; height: 6px; border-radius: 50%; background: #b98d6a; }
.me-dot { position: absolute; right: -1px; bottom: 0; width: 4px; height: 4px; border-radius: 50%; background: #5fb34a; }
.rb-body { display: grid; grid-template-columns: 11px 1fr; height: 391px; }
.rb-rail { background: #f3f2f1; display: flex; flex-direction: column; align-items: center; gap: 11px; padding-top: 6px; color: #8e8e8e; }
.rb-rail svg { width: 6px; height: 6px; }
.rb-main { min-width: 0; }
.rb-head { height: 51px; background: #fff; padding: 11px 7px 0 8px; }
.rb-person { display: flex; align-items: center; height: 16px; }
.av { flex: none; width: 13px; height: 13px; border-radius: 50%; display: flex; align-items: center; justify-content: center; color: #e8eefc; font-size: 4.300px; font-weight: 600; }
.av-lg { width: 16px; height: 16px; font-size: 6px; }
.av-b { background: #4a70e4; }
.av-t { background: #2b7f7c; }
.av-r { background: #c5342e; }
.av-g { background: #f3f2f1; color: #555; }
.rb-who { margin-left: 5px; }
.rb-name { font-size: 7.500px; line-height: 9px; font-weight: 600; color: #2b2b2b; }
.rb-kind { font-size: 4.800px; line-height: 7px; margin-top: 1px; color: #555; }
.rb-mgr { border-left: 1px solid #e5e5e5; padding-left: 5px; margin-right: 10px; margin-top: -2px; }
.rb-mgr-name { font-size: 5.200px; line-height: 8px; color: #3c6fe0; font-weight: 500; }
.rb-mgr-role { font-size: 4.300px; line-height: 8px; color: #777; }
.rb-mgr-chev { width: 6px; height: 6px; color: #888; }
.rb-tabs { display: flex; gap: 9.500px; margin-top: 10px; padding-left: 2px; font-size: 5.100px; font-weight: 600; color: #444; height: 14px; line-height: 12px; }
.rb-tabs span { height: 14px; }
.tab-on { border-bottom: 1px solid #4a8ce8; }
.tab-soft { color: #9a9a9a; font-weight: 400; }
.rb-content { display: grid; grid-template-columns: 189px 1fr; height: 340px; }
.rb-left { background: #f9f9f8; padding-left: 16px; overflow: hidden; }
.tree { border-left: 1px solid #d8d8d8; padding: 13px 6px 0 11px; height: 329px; }
.gr-head { display: flex; justify-content: space-between; align-items: center; height: 12px; margin-bottom: 6px; }
.gr-label { font-size: 5.500px; font-weight: 600; color: #6a6a6a; }
.gr-btn { width: 58px; height: 12px; background: #fff; border: 1px solid #a7a7a7; border-radius: 1px; font-size: 5.300px; color: #444; display: flex; align-items: center; justify-content: center; gap: 2px; font-family: inherit; }
.gr-btn b { font-size: 8px; line-height: 8px; font-weight: 400; }
.gcard { background: #fff; box-shadow: 0 .5px 3px rgba(0,0,0,.15); height: 45px; margin-bottom: 6px; position: relative; }
.gcard::before { content: ""; position: absolute; left: -12px; top: 12px; width: 12px; height: 1px; background: #d8d8d8; }
.gc-top { height: 23px; padding: 4px 5px 0; display: flex; gap: 4px; margin: 0 0 0; position: relative; }
.gc-top::after { content: ""; position: absolute; left: 25px; right: 5px; bottom: 0; height: 1px; background: #f0f0f0; }
.gc-house { width: 16px; height: 16px; background: #2f6be0; color: #e8f0ff; display: flex; align-items: center; justify-content: center; }
.gc-house svg { width: 8px; height: 8px; }
.gc-name { font-size: 6px; line-height: 8px; font-weight: 600; color: #555; white-space: nowrap; margin-top: 1.500px; }
.gc-sub { font-size: 4.600px; line-height: 6px; color: #777; white-space: nowrap; }
.gc-txt { flex: 1; }
.gc-chev { width: 6px; height: 6px; color: #6f9cf0; margin: 3px 2px 0 0; }
.gc-foot { display: flex; gap: 1.300px; padding: 4px 0 0 25px; position: relative; }
.gc-foot::before { content: ""; position: absolute; left: 13px; top: -7px; width: 11px; height: 17px; border-left: 1px solid #e3e3e3; border-bottom: 1px solid #e3e3e3; }
.gcard-open { height: 126px; margin-bottom: 7px; border: 1px solid #7b7b7b; box-shadow: 0 1px 3px rgba(0,0,0,.25); }
.gcard-open .gc-top { padding-top: 3px; height: 22px; }
.gcard-open .gc-top::after { display: none; }
.gm-head { display: grid; grid-template-columns: 82px 1fr; padding-left: 24px; margin-top: 4px; height: 10px; font-size: 4.300px; color: #4d82e8; font-weight: 600; line-height: 10px; }
.gm-list { height: 68px; padding-left: 24px; padding-top: 1.500px; overflow: hidden; border-bottom: 1px solid #f0f0f0; margin: 0 0 0 0; }
.gm { display: flex; align-items: center; height: 15.300px; gap: 3px; }
.gm-who { flex: 1; }
.gm-name { font-size: 5.200px; line-height: 6px; color: #555; font-weight: 500; }
.gm-sub { font-size: 4.200px; line-height: 5px; color: #888; }
.gm-role { font-size: 4.200px; color: #888; margin-right: 9px; width: 37px; white-space: nowrap; }
.gm-actions { display: flex; justify-content: flex-end; gap: 8px; padding: 5px 7px 0 0; color: #8fb3ef; }
.gm-actions svg { width: 6px; height: 7px; }
.rel-label { font-size: 5.500px; line-height: 10px; font-weight: 600; color: #6a6a6a; margin-top: 44px; }
.rel-box { border: 1px dashed #bdbdbd; height: 24px; margin-top: 3px; padding: 4px 0 0 4px; display: flex; gap: 1.300px; position: relative; background: #fafafa; }
.rel-box::before { content: ""; position: absolute; left: -12px; top: 11px; width: 12px; height: 1px; background: #d8d8d8; }
.rb-right { padding-top: 6px; min-width: 0; }
.hh { background: #fff; height: 55px; padding: 0 9px; }
.hh-title { display: flex; align-items: center; gap: 4px; height: 27px; padding-top: 9px; border-bottom: 1px solid #efefef; }
.hh-title h2 { font-size: 11.800px; font-weight: 600; color: #3b3b3b; }
.hh-tag { font-size: 3.800px; background: #ededed; color: #555; padding: 1.500px 3px; margin-left: 1px; }
.hh-pen { width: 6.500px; height: 6.500px; color: #8cb1f2; margin-left: 3px; }
.hh-line { font-size: 4.900px; line-height: 7.500px; color: #8a8a8a; }
.hh-title + .hh-line { margin-top: 4px; }
.hh-line b { color: #555; font-weight: 600; }
.kpis { display: grid; grid-template-columns: 89px 212px 212px; column-gap: 6.500px; height: 86px; margin: 7px 8px 7px 6px; }
.kpi { background: #fff; box-shadow: 0 .5px 2px rgba(0,0,0,.12); display: flex; flex-direction: column; }
.kpi-head { flex: none; height: 17px; border-bottom: 1px solid #efefef; padding: 0 6px; display: flex; align-items: center; gap: 5px; font-size: 4.600px; color: #999; white-space: nowrap; overflow: hidden; }
.kpi-head b { color: #444; font-weight: 600; }
.kpi-big { font-size: 15px; line-height: 22px; font-weight: 600; color: #1f1f1f; text-align: center; margin-top: 16px; letter-spacing: -.01em; }
.donut { flex: none; width: 212px; height: 54px; }
.ring { fill: none; stroke-width: 6; }
.donut-val { font-size: 6.500px; font-weight: 600; fill: #333; }
.donut-pct { font-size: 4px; font-weight: 600; fill: #555; }
.legend { display: flex; gap: 6px; padding: 1px 0 0 6px; font-size: 4.300px; color: #888; }
.legend span { display: flex; align-items: center; gap: 2px; }
.sw { width: 5px; height: 5px; display: block; }
.sw-a { background: #2f7cf0; } .sw-b { background: #1b4aa8; } .sw-c { background: #cfdef8; } .sw-d { background: #333; } .sw-e { background: #9b9b9b; }
.hold { background: #fff; height: 179px; padding: 0 11px 0 9px; }
.hold-top { display: flex; align-items: center; height: 27px; padding-top: 6px; border-bottom: 1px solid #efefef; }
.hold-title { font-size: 5.800px; font-weight: 600; color: #4a4a4a; }
.hold-by { font-size: 5px; color: #888; margin-right: 7px; }
.hold-tab { font-size: 5px; color: #666; margin-right: 10px; height: 17px; line-height: 17px; margin-top: 0; }
.hold-on { color: #333; font-weight: 600; border-bottom: 1px solid #4a8ce8; }
.hold-pen { width: 6.500px; height: 6.500px; color: #8cb1f2; margin: 0 2px 0 0; }
.hr { display: grid; grid-template-columns: 23px 331px 39px 30px 1fr; align-items: center; height: 17px; border-bottom: 1px solid #f1f1f1; font-size: 4.900px; color: #6a6a6a; white-space: nowrap; }
.hr-head { height: 20px; color: #555; }
.hr-group { display: flex; height: 18px; }
.hg-chev { width: 6px; height: 6px; color: #888; margin: 0 9px 0 8px; }
.hg { display: flex; align-items: center; gap: 3px; font-size: 5.600px; color: #555; }
.hg svg { width: 8px; height: 7px; color: #777; }
.ty { font-size: 4.300px; color: #999; }
.val { text-align: right; color: #666; }
.own { padding-left: 10px; display: flex; align-items: center; gap: 3px; font-size: 5.200px; color: #666; }
.own-multi { gap: 1.500px; }
.face { display: block; width: 9px; height: 9px; border-radius: 50%; background: radial-gradient(circle at 50% 55%, #c99d80 0 28%, #1a1412 30%); }
.av-s { width: 9px; height: 9px; font-size: 3px; }
.warn { width: 6.500px; height: 6.500px; color: #ef8e7c; margin-left: auto; margin-right: 8px; }

/* ---------- Customer Insights ---------- */
.win-ci {
  left: 1112px; top: 586px; width: 620px; height: 349px;
  border-radius: 14px; background: #f8f7f6; color: #444;
  font-family: "Open Sans", "Liberation Sans", sans-serif;
  box-shadow: 0 10px 50px rgba(10,20,50,.22); filter: blur(.4px);
}
.ci-top { height: 17px; background: #021a3d; display: flex; align-items: center; padding: 0 3px 0 8px; color: #d6dce6; font-size: 5.100px; }
.ci-waffle { width: 6px; height: 6px; margin-right: 4px; color: #e3e8f0; }
.ci-bld { width: 6px; height: 6px; margin-right: 3px; }
.ci-org { margin-right: 41px; }
.ci-topic { width: 6.500px; height: 6.500px; margin-right: 11px; color: #b8c0cc; }
.ci-q { color: #b8c0cc; margin-right: 10px; }
.ci-me { display: block; width: 11px; height: 11px; border-radius: 50%; background: radial-gradient(circle at 50% 50%, #c6a27f 0 45%, #f0ece6 50%); }
.ci-body { display: grid; grid-template-columns: 81px 1fr; height: 332px; }
.ci-nav { background: #f3f2f1; font-size: 5px; color: #666; }
.ci-burger { margin: 7px 0 0 6px; width: 7px; height: 3px; border-top: 1px solid #aaa; border-bottom: 1px solid #aaa; }
.ci-aud { display: flex; align-items: center; justify-content: space-between; padding: 0 11px 0 3px; margin-top: 13px; height: 14px; }
.ci-aud svg { width: 5px; height: 5px; color: #888; }
.ci-aud-t { font-size: 5px; line-height: 7px; color: #555; font-weight: 600; }
.ci-aud-s { font-size: 3.900px; line-height: 6px; color: #999; }
.ci-item { display: flex; align-items: center; gap: 3px; height: 14.250px; padding-left: 5px; position: relative; margin-top: 0; }
.ci-aud + .ci-item { margin-top: 6px; }
.ci-item svg { width: 6px; height: 6px; margin-right: 2px; color: #777; }
.ci-on { background: #fff; color: #444; font-weight: 600; }
.ci-on::before { content: ""; position: absolute; left: 1px; top: 3px; bottom: 3px; width: 1.500px; background: #3f6ee0; }
.ci-item .ci-chev { position: absolute; right: 5px; top: 4px; width: 5px; height: 5px; margin: 0; color: #999; }
.ci-main { min-width: 0; }
.ci-sub { height: 16px; background: #fff; display: flex; align-items: center; padding-left: 15px; font-size: 4.900px; color: #777; }
.ci-sub svg { width: 6px; height: 5px; margin: 0 2px 0 0; color: #6a8fd8; }
.ci-back { color: #6a8fd8; margin-right: 3px; font-size: 6px; }
.ci-sep { display: block; height: 9px; border-left: 1px solid #e0e0e0; margin: 0 3px; }
.ci-panels { display: grid; grid-template-columns: 168px 167px 167px; gap: 6px; padding: 6px 12px; }
.panel { background: #fff; box-shadow: 0 .5px 2px rgba(0,0,0,.14); overflow: hidden; }
.p-profile, .p-activity { height: 303px; }
.p-profile { padding: 0 5px; font-size: 4.700px; color: #777; }
.pf-top { height: 47px; display: flex; gap: 6px; padding: 6px 0 0 0; }
.pf-av { flex: none; width: 36px; height: 36px; border-radius: 50%; background: #004e8c; color: #fff; font-size: 15px; font-weight: 500; display: flex; align-items: center; justify-content: center; }
.pf-name { font-size: 6.800px; line-height: 9px; color: #555; font-weight: 500; white-space: nowrap; margin-top: -1px; }
.pf-meta { font-size: 3.900px; line-height: 9px; color: #888; }
.pf-acts { display: flex; gap: 4px; margin-top: 2px; color: #7fa3e0; }
.pf-acts svg { width: 7px; height: 6px; }
.kv { display: grid; grid-template-columns: 42px 1fr; height: 15px; align-items: center; border-bottom: 1px solid #f5f5f5; }
.kv a, .ct a { color: #5c82c4; }
.kv-dark span:last-child { color: #666; }
.kv-addr { height: 29px; align-items: start; line-height: 7px; padding-top: 4px; }
.pf-contacts { height: 13px; display: flex; align-items: center; justify-content: space-between; padding: 0 6px 0 2px; font-weight: 600; color: #5c82c4; font-size: 4.600px; }
.pf-contacts svg { width: 4px; height: 4px; color: #999; }
.ct-name { font-size: 5px; font-weight: 600; color: #555; height: 10px; line-height: 11px; margin-top: 3px; }
.ct { display: grid; grid-template-columns: 44px 1fr; padding-left: 6px; height: 11.350px; align-items: center; white-space: nowrap; }
.ct span:last-child { color: #666; }
.p-activity { padding: 0 5px; }
.at-head { height: 18px; display: flex; align-items: center; justify-content: space-between; padding-right: 2px; font-size: 5px; color: #666; }
.at-head b { font-weight: 600; }
.at-filter { display: flex; align-items: center; gap: 2px; color: #888; }
.at-filter svg { width: 6px; height: 6px; color: #777; }
.at-sum { display: grid; grid-template-columns: 54px 54px 54px; grid-auto-rows: 30px; height: 56px; border-bottom: 1px dotted #e5e5e5; margin-right: 5px; margin-left: -5px; padding-left: 1px; }
.at-cell { display: flex; flex-direction: column; align-items: center; font-size: 3.900px; color: #888; white-space: nowrap; gap: 2px; padding-left: 5px; }
.dot { flex: none; width: 15px; height: 15px; border-radius: 50%; display: flex; align-items: center; justify-content: center; color: #eee; }
.dot svg { width: 7px; height: 7px; }
.d-case { background: #5c126b; } .d-prog { background: #b7409c; } .d-order { background: #f0935a; } .d-ship { background: #2cc5e5; }
.at-month { display: flex; align-items: center; gap: 4px; height: 13px; font-size: 4.200px; color: #6a8cc4; font-weight: 500; }
.at-month1 { margin-top: 6px; }
.at-month svg { width: 4px; height: 4px; color: #aaa; }
.at-by { font-size: 4.200px; color: #6a8cc4; }
.at-item { display: flex; align-items: center; gap: 5px; height: 23.400px; }
.at-month + .at-item { margin-top: 2px; }
.at-t { font-size: 5px; line-height: 7px; color: #666; }
.at-t small { font-size: 4px; color: #888; }
.at-s { font-size: 3.900px; line-height: 6px; color: #999; }
.p-stack { display: flex; flex-direction: column; gap: 6px; }
.p-office { height: 74px; padding: 6px 5px 0; }
.off-t { font-size: 5px; line-height: 7px; color: #555; font-weight: 600; }
.off-s { font-size: 3.400px; line-height: 5px; color: #888; }
.off-stats { display: flex; justify-content: space-between; margin-top: 16px; }
.off-stat { text-align: center; }
.off-num { font-size: 8px; line-height: 10px; font-weight: 500; color: #444; display: flex; align-items: center; justify-content: center; gap: 2px; }
.off-num svg { width: 7.500px; height: 7.500px; color: #5f85c9; }
.off-lab { font-size: 3.900px; line-height: 7px; color: #888; }
.p-chart { padding-top: 4px; height: 97px; }
.p-chart1 { height: 96px; }
.ch-t { font-size: 4.800px; line-height: 7px; padding: 0 5px; color: #666; font-weight: 500; height: 11px; }
.chart { width: 167px; height: 81px; }
.grid { stroke: #f0f0f0; stroke-width: .7; fill: none; }
.axis { stroke: #e5e5e5; stroke-width: .7; fill: none; }
.bars rect { fill: #1d8bf5; }
.yl, .xl text { font-size: 3.500px; fill: #888; }
.xl text { text-anchor: end; }
.yt { font-size: 4px; fill: #777; }
```
